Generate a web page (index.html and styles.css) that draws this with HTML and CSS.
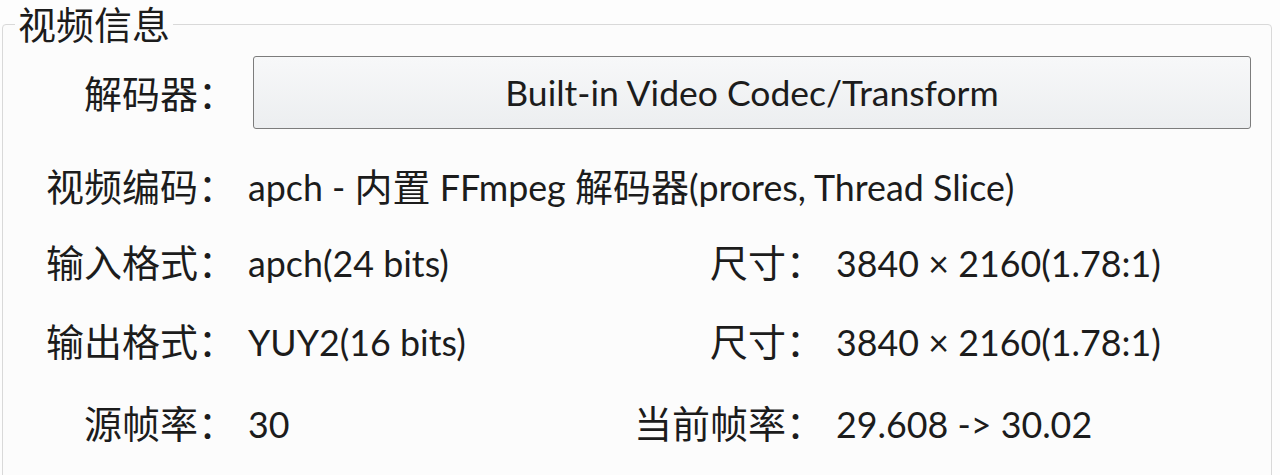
FILE: index.html
```html
<!DOCTYPE html>
<html lang="zh-CN">
<head>
<meta charset="utf-8">
<link rel="stylesheet" href="styles.css">
</head>
<body>
<fieldset class="group">
  <legend class="group-title">视频信息</legend>
  <div class="row row-decoder">
    <div class="label">解码器：</div>
    <div class="button">Built-in Video Codec/Transform</div>
  </div>
  <div class="row row-codec">
    <div class="label">视频编码：</div>
    <div class="value wide">apch - <span class="cjk">内置</span> FFmpeg <span class="cjk">解码器</span>(prores, Thread Slice)</div>
  </div>
  <div class="row row-in">
    <div class="label">输入格式：</div>
    <div class="value">apch(24 bits)</div>
    <div class="label">尺寸：</div>
    <div class="value">3840 × 2160(1.78:1)</div>
  </div>
  <div class="row row-out">
    <div class="label">输出格式：</div>
    <div class="value">YUY2(16 bits)</div>
    <div class="label">尺寸：</div>
    <div class="value">3840 × 2160(1.78:1)</div>
  </div>
  <div class="row row-fps">
    <div class="label">源帧率：</div>
    <div class="value">30</div>
    <div class="label">当前帧率：</div>
    <div class="value">29.608 -&gt; 30.02</div>
  </div>
</fieldset>
</body>
</html>
```
FILE: styles.css
```css
html, body {
  margin: 0;
  padding: 0;
  background: #fdfdfd;
}
body {
  width: 1280px;
  height: 475px;
  overflow: hidden;
  font-family: "Lato", "Noto Sans CJK SC", sans-serif;
  font-size: 38px;
  color: #1c1c1c;
}
.group {
  margin: 0 8px 0 2px;
  padding: 0 0 40px 0;
  border: 1px solid #d9d9d9;
  border-radius: 4px;
  background: #fcfcfc;
  min-inline-size: 0;
}
.group-title {
  margin-left: 12px;
  padding: 0 3px;
  line-height: 48px;
  height: 48px;
}
.row {
  display: grid;
  grid-template-columns: 233px 340px 224px 1fr;
  column-gap: 12px;
  align-items: baseline;
  line-height: 48px;
}
.label {
  text-align: right;
  white-space: nowrap;
}
.value {
  white-space: nowrap;
  font-size: 35.8px;
}
.cjk {
  font-size: 38px;
}
.wide {
  grid-column: 2 / 5;
}
.row-decoder {
  margin-top: 8px;
  align-items: center;
}
.button {
  grid-column: 2 / 5;
  margin: 0 20px 0 5px;
  height: 71px;
  border: 1px solid #7c7c7c;
  border-radius: 3px;
  background: linear-gradient(#f7f8f9, #eceef0);
  display: flex;
  align-items: center;
  justify-content: center;
  font-size: 35.5px;
}
.row-codec { margin-top: 33px; }
.row-in { margin-top: 26px; }
.row-out { margin-top: 29px; }
.row-fps { margin-top: 32px; }
```
